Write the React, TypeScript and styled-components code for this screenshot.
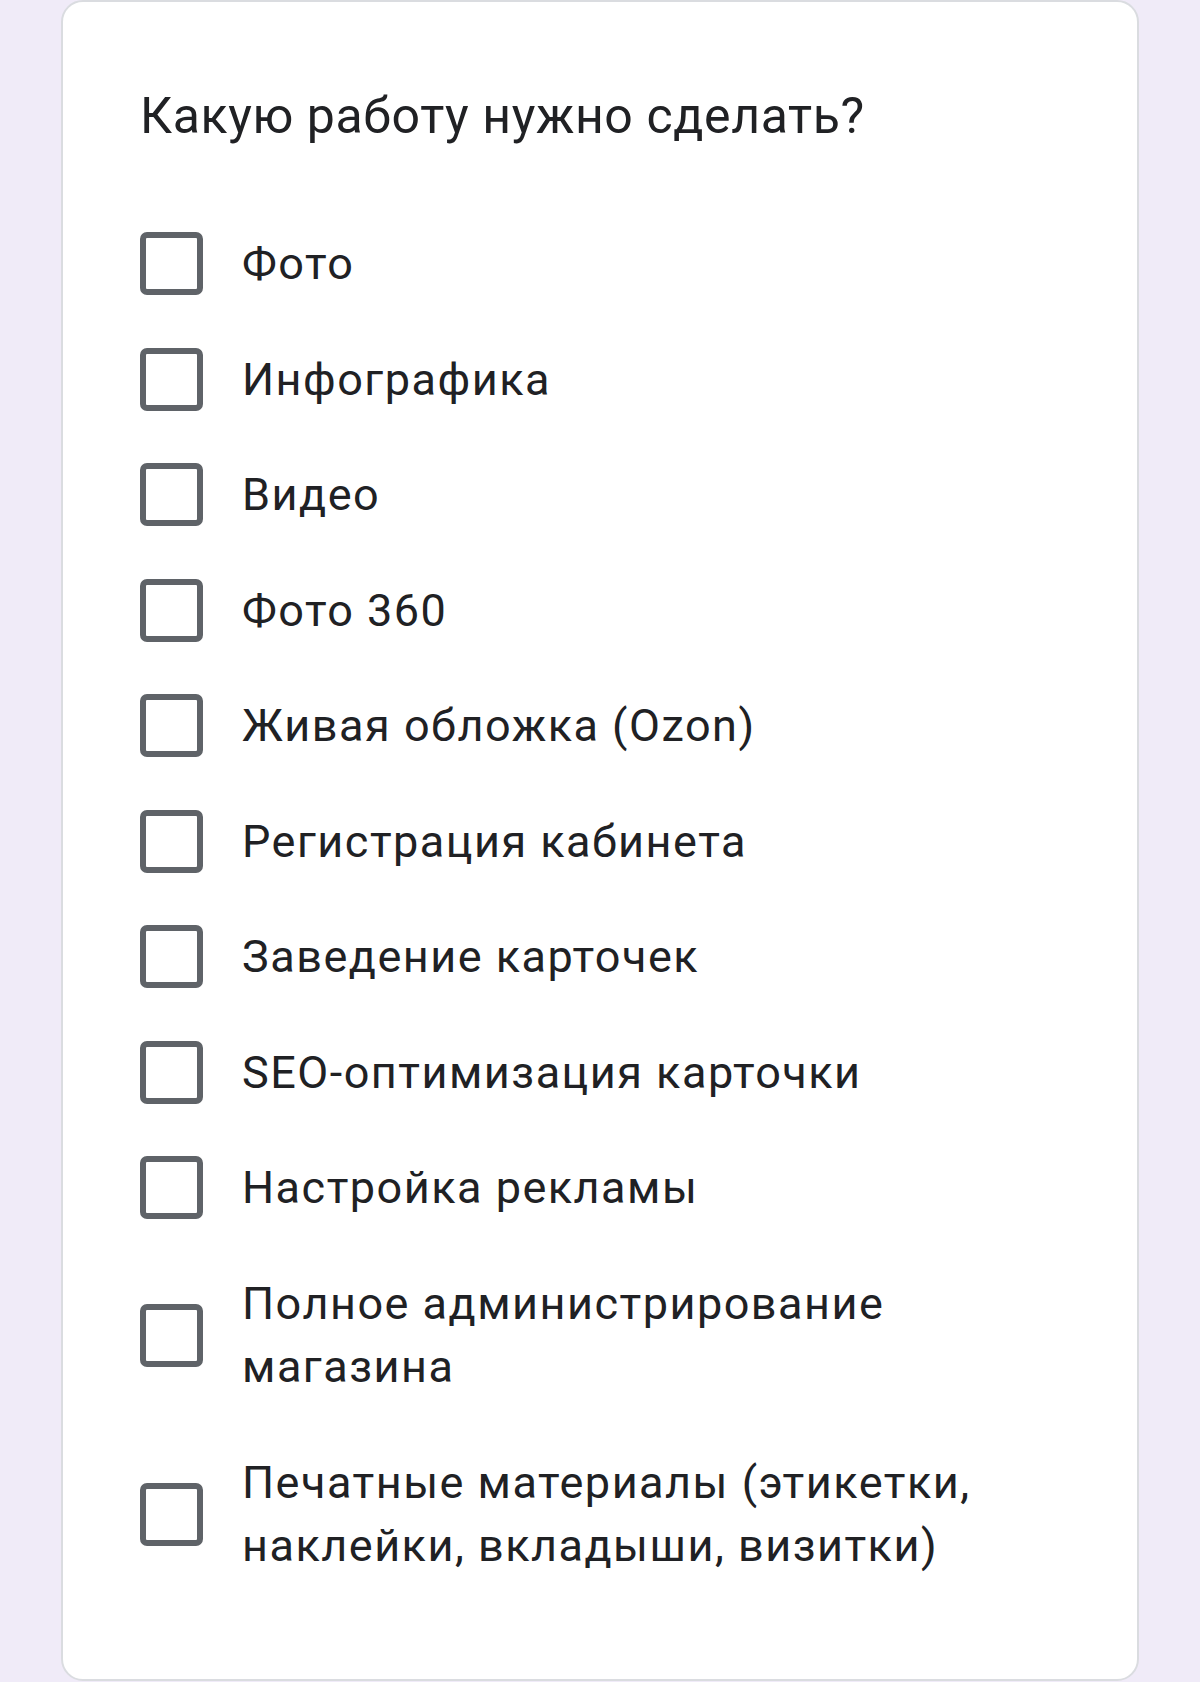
import React from 'react';
import styled, { createGlobalStyle } from 'styled-components';

const GlobalStyle = createGlobalStyle`
  html, body {
    margin: 0;
    padding: 0;
    background: #f0ebf8;
  }
  body {
    font-family: Roboto, "Noto Sans", "Liberation Sans", sans-serif;
  }
`;

const Page = styled.div`
  width: 1200px;
  height: 1682px;
  box-sizing: border-box;
  padding: 0 61px;
  overflow: hidden;
`;

const Card = styled.div`
  box-sizing: border-box;
  height: 1681px;
  background: #ffffff;
  border: 2px solid #dadce0;
  border-radius: 22px;
  padding: 84px 77px 0 77px;
`;

const Title = styled.h2`
  margin: 0 0 86px;
  font-size: 50px;
  line-height: 60px;
  font-weight: 400;
  letter-spacing: 0.6px;
  color: #202124;
`;

const Options = styled.div`
  display: flex;
  flex-direction: column;
  gap: 52px;
`;

const Option = styled.label`
  display: flex;
  align-items: center;
  gap: 39px;
  cursor: pointer;
`;

const Box = styled.span`
  flex: none;
  box-sizing: border-box;
  width: 63px;
  height: 63px;
  border: 6px solid #5f6368;
  border-radius: 7px;
`;

const Label = styled.span`
  font-size: 45px;
  line-height: 63.5px;
  letter-spacing: 1.5px;
  color: #202124;
  max-width: 816px;
`;

const options = [
  'Фото',
  'Инфографика',
  'Видео',
  'Фото 360',
  'Живая обложка (Ozon)',
  'Регистрация кабинета',
  'Заведение карточек',
  'SEO-оптимизация карточки',
  'Настройка рекламы',
  'Полное администрирование магазина',
  'Печатные материалы (этикетки, наклейки, вкладыши, визитки)',
];

function App() {
  return (
    <Page>
      <GlobalStyle />
      <Card>
        <Title>Какую работу нужно сделать?</Title>
        <Options>
          {options.map((item) => (
            <Option key={item}>
              <Box />
              <Label>{item}</Label>
            </Option>
          ))}
        </Options>
      </Card>
    </Page>
  );
}

export default App;
